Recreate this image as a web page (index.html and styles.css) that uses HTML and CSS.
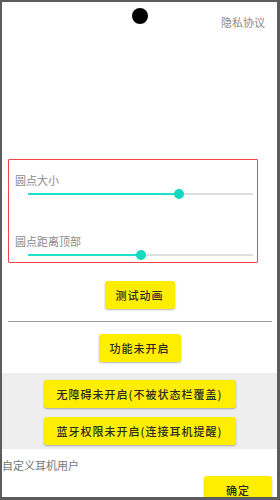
FILE: index.html
```html
<!DOCTYPE html>
<html lang="zh-CN">
<head>
    <meta charset="UTF-8">
    <meta name="viewport" content="width=device-width, initial-scale=1.0">
    <title>圆点设置</title>
    <link rel="stylesheet" href="styles.css">
</head>
<body>
    <div class="screen">
        <header class="top">
            <span></span>
            <span class="dot"></span>
            <a class="privacy" href="#">隐私协议</a>
        </header>

        <div class="settings">
            <div class="label">圆点大小</div>
            <div class="slider">
                <div class="fill" style="width: 67%"></div>
                <div class="thumb"></div>
            </div>
            <div class="label second">圆点距离顶部</div>
            <div class="slider">
                <div class="fill" style="width: 50%"></div>
                <div class="thumb"></div>
            </div>
        </div>

        <div class="center">
            <button class="btn">测试动画</button>
        </div>
        <hr class="divider">
        <div class="center">
            <button class="btn">功能未开启</button>
        </div>

        <div class="perms">
            <button class="btn wide">无障碍未开启(不被状态栏覆盖)</button>
            <button class="btn wide">蓝牙权限未开启(连接耳机提醒)</button>
        </div>

        <div class="custom">
            <div class="custom-label">自定义耳机用户</div>
            <div class="custom-row">
                <button class="btn ok">确定</button>
            </div>
        </div>
    </div>
</body>
</html>
```

FILE: styles.css
```css
body {
    margin: 0;
    font-family: "Noto Sans CJK SC", "Noto Sans", sans-serif;
    background: #fff;
}

.screen {
    width: 280px;
    height: 500px;
    box-sizing: border-box;
    border: 2px solid #5c5c5c;
    border-right-width: 3px;
    border-bottom-width: 3px;
    overflow: hidden;
    background: #fff;
}

/* top bar */
.top {
    display: grid;
    grid-template-columns: 1fr auto 1fr;
    align-items: start;
    height: 157px;
}

.dot {
    width: 16px;
    height: 16px;
    margin-top: 6px;
    border-radius: 50%;
    background: #000;
}

.privacy {
    justify-self: end;
    margin: 12px 12px 0 0;
    font-size: 11px;
    line-height: 16px;
    color: #8a8a8a;
    text-decoration: none;
}

/* red box with sliders */
.settings {
    width: 250px;
    height: 104px;
    box-sizing: border-box;
    margin-left: 6px;
    border: 1.5px solid #f2474a;
    border-radius: 1px;
    padding: 12px 4px 0 6px;
}

.label {
    font-size: 11px;
    line-height: 16px;
    color: #8a8a8a;
}

.label.second {
    margin-top: 38px;
}

.slider {
    position: relative;
    height: 2px;
    margin: 5px 0 0 13px;
    background: #dedede;
}

.slider .fill {
    height: 2px;
    background: #1fe0c8;
}

.slider .thumb {
    position: absolute;
    top: -4px;
    width: 10px;
    height: 10px;
    margin-left: -5px;
    border-radius: 50%;
    background: #12d9bf;
}

.settings .slider:nth-of-type(2) .thumb { left: 67%; }
.settings .slider:nth-of-type(4) .thumb { left: 50%; }

/* buttons */
.center {
    display: flex;
    justify-content: center;
}

.btn {
    height: 28px;
    padding: 0 11px;
    border: none;
    border-radius: 3px;
    background: #ffee00;
    box-shadow: 0 1px 2px rgba(0, 0, 0, 0.3);
    font-family: inherit;
    font-size: 11px;
    font-weight: 500;
    letter-spacing: 1px;
    color: #2a2a2a;
}

.settings + .center {
    margin-top: 18px;
}

.divider {
    margin: 12px 5px 0 6px;
    border: none;
    border-top: 1px solid #9a9a9a;
    height: 0;
}

.divider + .center {
    margin-top: 12px;
}

.perms {
    margin-top: 11px;
    padding: 7px 0 4px;
    background: #eeeeee;
    display: flex;
    flex-direction: column;
    align-items: center;
    gap: 9px;
}

.btn.wide {
    width: 192px;
    padding: 0;
}

.custom-label {
    margin-top: 8px;
    font-size: 11px;
    line-height: 16px;
    color: #777;
}

.custom-row {
    display: flex;
    justify-content: flex-end;
    padding-right: 5px;
    margin-top: 3px;
}

.btn.ok {
    width: 68px;
    padding: 0;
    border-radius: 3px 3px 0 0;
}
```
